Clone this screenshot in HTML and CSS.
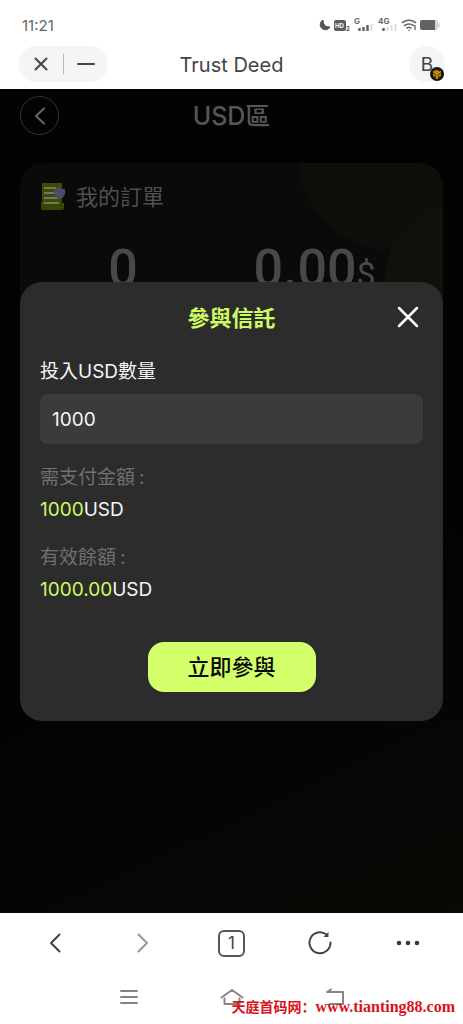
FILE: index.html
```html
<!DOCTYPE html>
<html lang="zh-Hant">
<head>
<meta charset="utf-8">
<meta name="viewport" content="width=device-width, initial-scale=1">
<title>Trust Deed</title>
<link rel="stylesheet" href="styles.css">
</head>
<body>
<div class="status">
  <time class="clock">11:21</time>
  <svg class="status-icons" width="122" height="18" viewBox="0 0 122 18" aria-hidden="true">
    <path d="M4 4A5.200 5.200 0 1 0 11 11Q4 11.500 4 4Z" fill="#555" stroke="#555" stroke-linejoin="round"/>
    <rect x="15" y="4" width="12" height="11" rx="2" fill="#5c5c5c"/>
    <text x="16" y="12" class="tiny tiny-light">HD</text>
    <text x="27" y="15" class="tiny">2</text>
    <text x="35" y="8" class="net">G</text>
    <path d="M40.500 15v-3M44.500 15v-4M48.500 15v-6" stroke="#666" stroke-width="2.500"/>
    <path d="M52.500 15V8" stroke="#ddd" stroke-width="2"/>
    <text x="59" y="8" class="net">4G</text>
    <path d="M64.500 15v-3" stroke="#666" stroke-width="2.500"/>
    <path d="M68.500 15v-4M72.500 15v-6M76.500 15V8" stroke="#ddd" stroke-width="2"/>
    <g fill="none" stroke="#666" stroke-width="1.600" stroke-linecap="round"><path d="M83.500 6.500q6.500-4.500 13 0M85.500 9.500q4.500-3 9 0M88 12q2-1.500 4 0M90 14.300h.1"/></g>
    <path d="M96 9v5" stroke="#777" stroke-width="1.500"/>
    <rect x="101" y="4" width="18" height="10" rx="3" fill="#d2d2d2"/>
    <path d="M103 4h13v10h-13a2 2 0 0 1-2-2V6a2 2 0 0 1 2-2Z" fill="#626262"/>
    <path d="M120 7v4" stroke="#d2d2d2" stroke-width="1.500"/>
  </svg>
</div>
<header class="titlebar">
  <div class="capsule">
    <button aria-label="Close"><svg width="14" height="14" viewBox="0 0 14 14"><path d="M1.500 1.500l11 11M12.500 1.500l-11 11" class="line"/></svg></button>
    <button aria-label="Minimize"><svg width="18" height="14" viewBox="0 0 18 14"><path d="M1 7h16" class="line"/></svg></button>
  </div>
  <h1>Trust Deed</h1>
  <button class="account" aria-label="Account">B
    <svg class="badge" width="14" height="14" viewBox="0 0 14 14"><circle cx="7" cy="7" r="7" fill="#171307"/><path d="M7 2.500l4 2v5l-4 2.500-4-2.500v-5Z" fill="#6f4b08"/><path d="M3 4.500L7 6.500l4-2M7 6.500V12M5 3.500l4 2M3 7.500l2 1M11 7.500l-2 1" fill="none" stroke="#e9a41b" stroke-width="1.300"/></svg>
  </button>
</header>
<main class="page">
  <div class="page-head">
    <button class="back" aria-label="返回"><svg width="12" height="18" viewBox="0 0 12 18"><path d="M10 1.500L2 9l8 7.500"/></svg></button>
    <h2>USD區</h2>
  </div>
  <section class="orders">
    <div class="orders-title">
      <svg width="26" height="28" viewBox="0 0 26 28" aria-hidden="true"><path d="M2 0h20v20h2v5a2 2 0 0 1-2 2H3l-2-2v-6h1Z" fill="#3f4a05"/><path d="M1 21h22v4a2 2 0 0 1-2 2H3a2 2 0 0 1-2-2Z" fill="#384503"/><path d="M4 5h12M4 10h15M4 15h15M4 20h15" stroke="#747668" stroke-width="2"/><path d="M14 6q3 0 5-2q2 2 6 2v5q-1 4-6 5q-4-1-5-5Z" fill="#474d64"/><path d="M16 9l3 3 4-4" fill="none" stroke="#555c73"/></svg>
      <span>我的訂單</span>
    </div>
    <div class="totals"><strong>0</strong><strong>0.00<small>$</small></strong></div>
  </section>
  <form class="dialog" role="dialog" aria-labelledby="dialog-title">
    <div class="dialog-head">
      <h3 id="dialog-title">參與信託</h3>
      <button type="button" class="close" aria-label="關閉"><svg width="22" height="22" viewBox="0 0 22 22"><path d="M2 2l18 18M20 2L2 20"/></svg></button>
    </div>
    <label for="amount">投入USD數量</label>
    <input id="amount" type="text" inputmode="numeric" value="1000">
    <dl>
      <dt>需支付金額<span>:</span></dt><dd><b>1000</b>USD</dd>
      <dt>有效餘額<span>:</span></dt><dd><b>1000.00</b>USD</dd>
    </dl>
    <button type="submit" class="join">立即參與</button>
  </form>
</main>
<footer>
  <nav class="browser-nav" aria-label="Browser">
    <button aria-label="Back"><svg width="12" height="20" viewBox="0 0 12 20"><path d="M10.500 1.500L2 10l8.500 8.500" class="line"/></svg></button>
    <button aria-label="Forward"><svg width="12" height="20" viewBox="0 0 12 20"><path d="M1.500 1.500L10 10l-8.500 8.500" class="line pale"/></svg></button>
    <button aria-label="Tabs"><span class="tabs">1</span></button>
    <button aria-label="Reload"><svg width="24" height="24" viewBox="0 0 24 24"><path d="M22.500 11.500A10.500 10.500 0 1 1 18.500 3.500" class="line"/><path d="M20.500 1v5h-5Z" fill="#444"/></svg></button>
    <button aria-label="More"><svg width="24" height="6" viewBox="0 0 24 6" fill="#383838"><circle cx="3" cy="3" r="2.300"/><circle cx="12" cy="3" r="2.300"/><circle cx="21" cy="3" r="2.300"/></svg></button>
  </nav>
  <nav class="system-nav" aria-label="System">
    <button aria-label="Recent apps"><svg width="18" height="16" viewBox="0 0 18 16"><path d="M1 2h16M1 8h16M1 14h16" class="line grey"/></svg></button>
    <button aria-label="Home"><svg width="24" height="18" viewBox="0 0 24 18"><path d="M1.500 9.500L12 2l10.500 7.500M4.500 10.500V16h15v-5.500" class="line grey"/></svg></button>
    <button aria-label="Return"><svg width="20" height="18" viewBox="0 0 20 18"><path d="M6 1.500L2 4H18V16H5" class="line grey"/></svg></button>
  </nav>
  <p class="watermark" lang="zh-Hans">天庭首码网：<span>www.tianting88.com</span></p>
</footer>
</body>
</html>
```
FILE: styles.css
```css
* { box-sizing: border-box; }
body {
  margin: 0;
  min-height: 100vh;
  display: flex;
  flex-direction: column;
  background: #fff;
  font-family: Inter, "Noto Sans CJK TC", sans-serif;
  color: #444;
}
h1, h2, h3, p, dl, dd { margin: 0; font-weight: 400; }
button {
  padding: 0;
  border: 0;
  background: none;
  font: inherit;
  color: inherit;
  display: grid;
  place-items: center;
}
svg { display: block; }
.line { fill: none; stroke: #444; stroke-width: 2; stroke-linecap: round; stroke-linejoin: round; }
.pale { stroke: #999; }
.grey { stroke: #858585; }

.status {
  height: 46px;
  padding: 4px 22px 0;
  display: flex;
  align-items: center;
  justify-content: space-between;
}
.clock { font-size: 15px; color: #666; }
.tiny { font: bold 6px Inter, sans-serif; fill: #555; }
.tiny-light { fill: #fff; }
.net { font: bold 8px Inter, sans-serif; fill: #666; }

.titlebar {
  height: 43px;
  padding: 0 18px;
  display: grid;
  grid-template-columns: 90px 1fr 90px;
  align-items: start;
}
.capsule {
  height: 36px;
  border-radius: 18px;
  background: #f4f5f7;
  display: grid;
  grid-template-columns: 1fr 1fr;
  align-items: center;
}
.capsule button { height: 20px; }
.capsule button + button { border-left: 1px solid #bbb; }
h1 { font-size: 20px; line-height: 38px; text-align: center; }
.account {
  position: relative;
  justify-self: end;
  width: 36px;
  height: 36px;
  border-radius: 50%;
  background: #f4f5f7;
  font-size: 19px;
}
.badge { position: absolute; right: 1px; bottom: 1px; }

.page {
  flex: 1;
  position: relative;
  padding: 0 20px;
  background: linear-gradient(155deg, #030303, #030303 60%, #080805);
}
.page-head {
  height: 74px;
  padding-top: 7px;
  display: grid;
  grid-template-columns: 40px 1fr 40px;
  align-items: start;
}
.back { width: 39px; height: 39px; border: 1px solid #333; border-radius: 50%; }
.back path { fill: none; stroke: #666; stroke-width: 2; stroke-linecap: round; stroke-linejoin: round; }
h2 { font-size: 25px; line-height: 40px; font-weight: 500; color: #565656; text-align: center; }
.orders {
  height: 292px;
  padding: 20px;
  border-radius: 24px;
  background:
    radial-gradient(circle at 445px 120px, #10100d 0 80px, transparent 81px),
    radial-gradient(circle at 375px -10px, #0e0e0b 0 97px, transparent 98px),
    #0a0a0a;
}
.orders-title { display: flex; align-items: center; gap: 10px; font-size: 22px; line-height: 28px; color: #505050; }
.totals { margin-top: 26px; display: grid; grid-template-columns: 166px 1fr; text-align: center; color: #484848; font-family: Roboto, sans-serif; }
.totals strong { font-size: 52px; line-height: 64px; font-weight: 500; }
.totals small { font-size: 34px; font-weight: 400; }

.dialog {
  position: absolute;
  top: 193px;
  left: 20px;
  right: 20px;
  padding: 20px 20px 29px;
  border-radius: 22px;
  background: #2c2c2c;
  color: #f5f5f5;
  display: flex;
  flex-direction: column;
}
.dialog-head { height: 54px; display: grid; grid-template-columns: 30px 1fr 30px; align-items: start; }
h3 { grid-column: 2; font-size: 22px; line-height: 32px; font-weight: 700; color: #cdfb62; text-align: center; }
.close { height: 30px; }
.close path { stroke: #fff; stroke-width: 2.500; stroke-linecap: round; }
label { font-size: 19px; line-height: 32px; }
#amount {
  width: 100%;
  height: 50px;
  margin: 6px 0 18px;
  padding: 0 12px;
  border: 0;
  border-radius: 8px;
  background: #3b3b3b;
  color: #f5f5f5;
  font: 19px Inter, sans-serif;
}
dt { font-size: 19px; line-height: 32px; color: #707070; }
dt span { margin-left: 4px; }
dd { height: 48px; font-size: 19px; line-height: 32px; }
dd b { font-weight: 400; color: #cdfb62; }
.join {
  align-self: center;
  width: 168px;
  height: 50px;
  margin-top: 20px;
  padding-bottom: 4px;
  border-radius: 16px;
  background: #d2ff6a;
  color: #0a0a0a;
  font-size: 22px;
  font-weight: 500;
}

footer { position: relative; height: 111px; }
.browser-nav { height: 60px; padding: 0 11px; display: grid; grid-template-columns: repeat(5, 1fr); }
.tabs { width: 27px; height: 27px; border: 2px solid #555; border-radius: 6px; font-size: 17px; line-height: 23px; text-align: center; }
.system-nav { height: 48px; padding: 0 77px; display: grid; grid-template-columns: repeat(3, 1fr); }
.watermark {
  position: absolute;
  right: 8px;
  bottom: 8px;
  color: #d8131b;
  font: bold 14px/20px "Noto Sans CJK SC", sans-serif;
  white-space: nowrap;
}
.watermark span { font: bold 16px "Liberation Serif", serif; }
```
